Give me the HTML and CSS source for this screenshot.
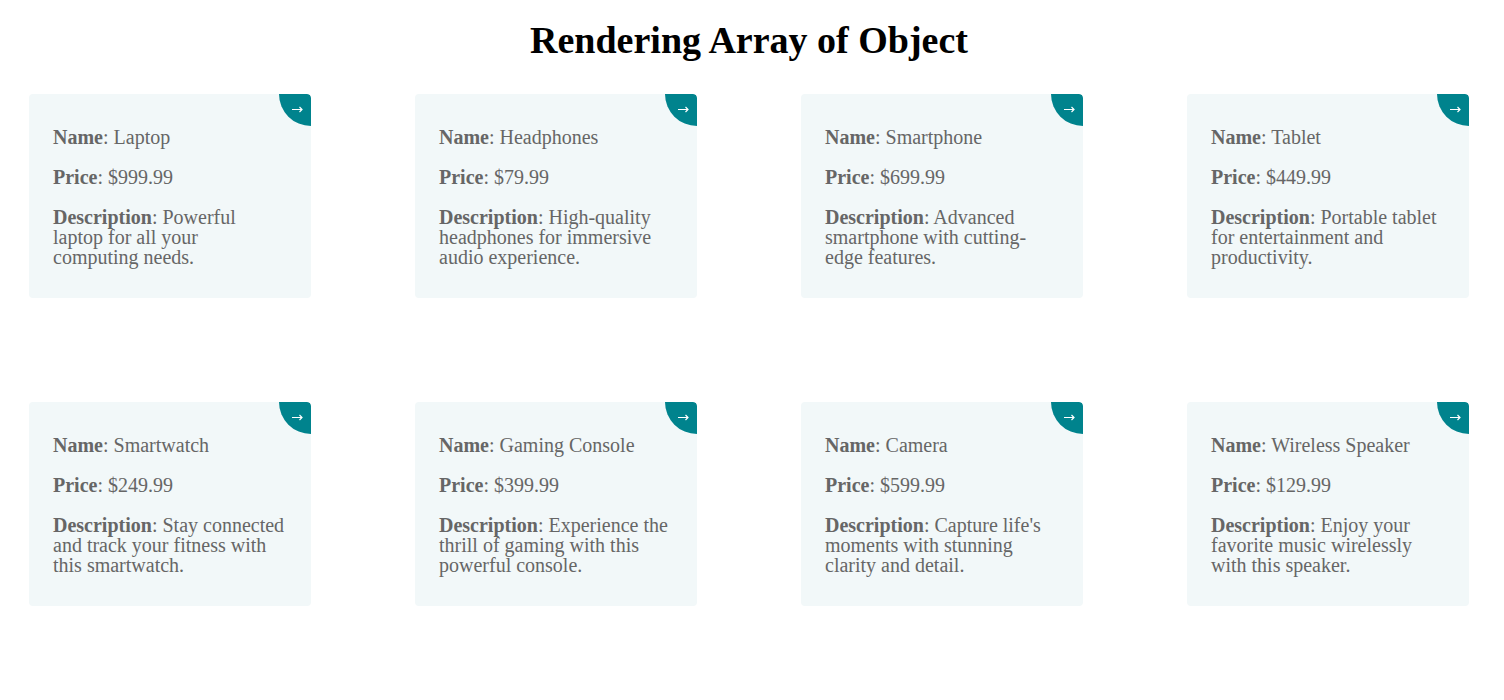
FILE: index.html
```html
<!DOCTYPE html>
<html lang="en">
<head>
<meta charset="utf-8">
<title>Rendering Array of Object</title>
<link rel="stylesheet" href="styles.css">
</head>
<body>
<svg class="symbols" aria-hidden="true"><symbol id="arrow" viewBox="0 0 12 8"><path d="M1 3.5H11M8.5 1L11 3.5L8.5 6" fill="none" stroke="#fff" stroke-width="1.2"/></symbol></svg>
<h1 class="title">Rendering Array of Object</h1>
<main class="grid">
<article class="card"><p><b>Name</b>: Laptop</p><p><b>Price</b>: $999.99</p><p><b>Description</b>: Powerful laptop for all your computing needs.</p><div class="corner"><svg class="arrow"><use href="#arrow"/></svg></div></article>
<article class="card"><p><b>Name</b>: Headphones</p><p><b>Price</b>: $79.99</p><p><b>Description</b>: High-quality headphones for immersive audio experience.</p><div class="corner"><svg class="arrow"><use href="#arrow"/></svg></div></article>
<article class="card"><p><b>Name</b>: Smartphone</p><p><b>Price</b>: $699.99</p><p><b>Description</b>: Advanced smartphone with cutting-edge features.</p><div class="corner"><svg class="arrow"><use href="#arrow"/></svg></div></article>
<article class="card"><p><b>Name</b>: Tablet</p><p><b>Price</b>: $449.99</p><p><b>Description</b>: Portable tablet for entertainment and productivity.</p><div class="corner"><svg class="arrow"><use href="#arrow"/></svg></div></article>
<article class="card"><p><b>Name</b>: Smartwatch</p><p><b>Price</b>: $249.99</p><p><b>Description</b>: Stay connected and track your fitness with this smartwatch.</p><div class="corner"><svg class="arrow"><use href="#arrow"/></svg></div></article>
<article class="card"><p><b>Name</b>: Gaming Console</p><p><b>Price</b>: $399.99</p><p><b>Description</b>: Experience the thrill of gaming with this powerful console.</p><div class="corner"><svg class="arrow"><use href="#arrow"/></svg></div></article>
<article class="card"><p><b>Name</b>: Camera</p><p><b>Price</b>: $599.99</p><p><b>Description</b>: Capture life's moments with stunning clarity and detail.</p><div class="corner"><svg class="arrow"><use href="#arrow"/></svg></div></article>
<article class="card"><p><b>Name</b>: Wireless Speaker</p><p><b>Price</b>: $129.99</p><p><b>Description</b>: Enjoy your favorite music wirelessly with this speaker.</p><div class="corner"><svg class="arrow"><use href="#arrow"/></svg></div></article>
</main>
</body>
</html>
```
FILE: styles.css
```css
* {
  box-sizing: border-box;
}

body {
  margin: 0;
  background: #fff;
  font-family: "Liberation Serif", "Times New Roman", serif;
}

.symbols {
  display: none;
}

.title {
  margin: 18px 6px 0 0;
  font-size: 38px;
  line-height: 44px;
  text-align: center;
  color: #000;
}

.grid {
  display: grid;
  grid-template-columns: repeat(4, 1fr);
  gap: 104px;
  padding: 32px 35px 32px 29px;
}

.card {
  position: relative;
  overflow: hidden;
  padding: 33px 24px 31px;
  border-radius: 4px;
  background: #f2f8f9;
}

.card p {
  margin: 0 0 20px;
  color: #666;
  font-size: 20px;
  line-height: 20px;
}

.card p:last-of-type {
  margin-bottom: 0;
}

.corner {
  position: absolute;
  top: 0;
  right: 0;
  display: flex;
  align-items: flex-start;
  justify-content: flex-end;
  width: 32px;
  height: 32px;
  padding: 12px 8px 0 0;
  border-radius: 0 4px 0 32px;
  background: #00838d;
}

.arrow {
  width: 12px;
  height: 8px;
}
```
